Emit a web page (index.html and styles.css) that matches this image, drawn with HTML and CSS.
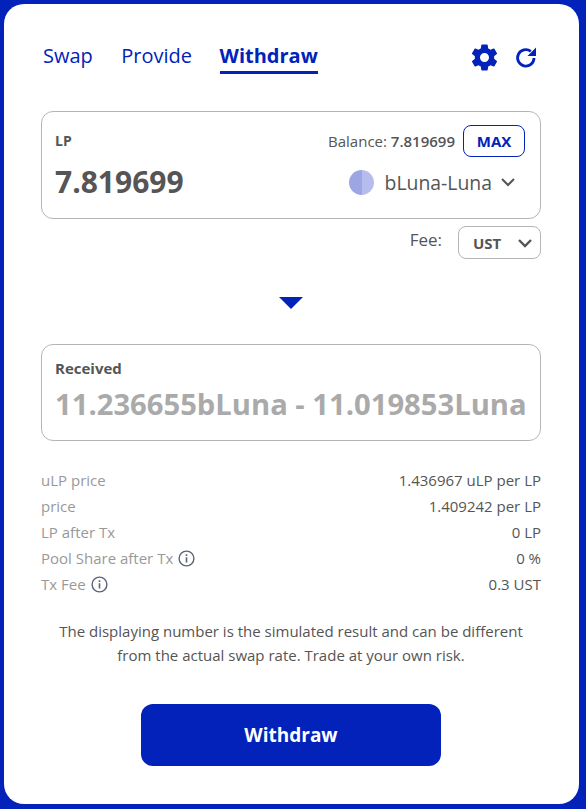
FILE: index.html
```html
<!DOCTYPE html>
<html lang="en">
<head>
    <meta charset="UTF-8">
    <title>Withdraw</title>
    <link rel="stylesheet" href="styles.css">
</head>
<body>
    <div class="card">
        <div class="top">
            <div class="tabs">
                <a class="tab">Swap</a>
                <a class="tab">Provide</a>
                <a class="tab active">Withdraw</a>
            </div>
            <div class="tools">
                <svg class="gear" width="31" height="31" viewBox="0 0 24 24"><path fill="#0222ba" d="M19.43 12.98c.04-.32.07-.64.07-.98s-.03-.66-.07-.98l2.11-1.65c.19-.15.24-.42.12-.64l-2-3.46c-.12-.22-.39-.3-.61-.22l-2.49 1c-.52-.4-1.08-.73-1.69-.98l-.38-2.65C14.46 2.18 14.25 2 14 2h-4c-.25 0-.46.18-.49.42l-.38 2.65c-.61.25-1.17.59-1.69.98l-2.49-1c-.23-.09-.49 0-.61.22l-2 3.46c-.13.22-.07.49.12.64l2.11 1.65c-.04.32-.07.65-.07.98s.03.66.07.98l-2.11 1.65c-.19.15-.24.42-.12.64l2 3.46c.12.22.39.3.61.22l2.49-1c.52.4 1.08.73 1.69.98l.38 2.65c.03.24.24.42.49.42h4c.25 0 .46-.18.49-.42l.38-2.65c.61-.25 1.17-.59 1.69-.98l2.49 1c.23.09.49 0 .61-.22l2-3.46c.12-.22.07-.49-.12-.64l-2.11-1.65zM12 15.5c-1.93 0-3.5-1.57-3.5-3.5s1.57-3.5 3.5-3.5 3.5 1.57 3.5 3.5-1.57 3.5-3.5 3.5z"/></svg>
                <svg class="refresh" width="24" height="24" viewBox="0 0 24 24"><path fill="none" stroke="#0222ba" stroke-width="2.8" d="M20 13a8.2 8.2 0 1 1-3.2-6.6"/><path fill="#0222ba" d="M22 2.5v8.5h-8.5z"/></svg>
            </div>
        </div>

        <div class="box from">
            <div class="box-row">
                <span class="box-label">LP</span>
                <div class="balance">
                    <span>Balance: <b>7.819699</b></span>
                    <button class="max">MAX</button>
                </div>
            </div>
            <div class="box-row amount-row">
                <span class="amount">7.819699</span>
                <div class="token">
                    <span class="token-icon"></span>
                    <span class="token-name">bLuna-Luna</span>
                    <svg width="16" height="10" viewBox="0 0 16 10"><path fill="none" stroke="#555" stroke-width="2" d="M2 2l6 6 6-6"/></svg>
                </div>
            </div>
        </div>

        <div class="fee">
            <span class="fee-label">Fee:</span>
            <div class="fee-select">
                <b>UST</b>
                <svg width="16" height="10" viewBox="0 0 16 10"><path fill="none" stroke="#555" stroke-width="2.4" d="M2 2l6 6 6-6"/></svg>
            </div>
        </div>

        <div class="arrow"></div>

        <div class="box to">
            <span class="box-label">Received</span>
            <div class="received">11.236655bLuna - 11.019853Luna</div>
        </div>

        <div class="info">
            <div class="info-row"><span>uLP price</span><span class="val">1.436967 uLP per LP</span></div>
            <div class="info-row"><span>price</span><span class="val">1.409242 per LP</span></div>
            <div class="info-row"><span>LP after Tx</span><span class="val">0 LP</span></div>
            <div class="info-row">
                <span class="with-icon">Pool Share after Tx
                    <svg width="17" height="17" viewBox="0 0 17 17"><circle cx="8.5" cy="8.5" r="7.4" fill="none" stroke="#5b6379" stroke-width="1.4"/><path fill="#5b6379" d="M7.7 7.2h1.6v5.3H7.7zM7.7 4.3h1.6v1.6H7.7z"/></svg>
                </span>
                <span class="val">0 %</span>
            </div>
            <div class="info-row">
                <span class="with-icon">Tx Fee
                    <svg width="17" height="17" viewBox="0 0 17 17"><circle cx="8.5" cy="8.5" r="7.4" fill="none" stroke="#5b6379" stroke-width="1.4"/><path fill="#5b6379" d="M7.7 7.2h1.6v5.3H7.7zM7.7 4.3h1.6v1.6H7.7z"/></svg>
                </span>
                <span class="val">0.3 UST</span>
            </div>
        </div>

        <p class="notice">The displaying number is the simulated result and can be different<br>from the actual swap rate. Trade at your own risk.</p>

        <button class="submit">Withdraw</button>
    </div>
</body>
</html>
```

FILE: styles.css
```css
* {
    margin: 0;
    padding: 0;
    box-sizing: border-box;
}

html, body {
    height: 100%;
}

body {
    font-family: "Open Sans", "Noto Sans", sans-serif;
    background: #0222ba;
    color: #555;
    padding: 4px 7px 5px 4px;
    overflow: hidden;
}

.card {
    background: white;
    border-radius: 20px;
    height: 800px;
    padding: 37px 38px 0 37px;
}

.top {
    display: flex;
    justify-content: space-between;
    align-items: flex-start;
    height: 70px;
}

.tabs {
    display: flex;
    gap: 28.5px;
    padding-left: 2px;
}

.tab {
    color: #0222ba;
    font-size: 20px;
    line-height: 30px;
    height: 33px;
}

.tab.active {
    margin-left: -1px;
    font-weight: 700;
    border-bottom: 3px solid #0222ba;
}

.tools {
    display: flex;
    align-items: center;
    gap: 14px;
    height: 30px;
    padding: 2px 3px 0 0;
}

.box {
    border: 1px solid #b5b5b5;
    border-radius: 12px;
}

.from {
    height: 108px;
    padding: 13px 15px 0 13px;
}

.box-row {
    display: flex;
    justify-content: space-between;
    align-items: center;
}

.box-label {
    font-size: 14px;
    font-weight: 700;
    line-height: 30px;
}

.balance {
    display: flex;
    align-items: center;
    gap: 8px;
    font-size: 15px;
}

.balance b {
    font-weight: 600;
}

.max {
    width: 62px;
    height: 32px;
    background: white;
    border: 1px solid #0222ba;
    border-radius: 8px;
    color: #0222ba;
    font-family: inherit;
    font-size: 15px;
    font-weight: 700;
}

.amount-row {
    margin-top: 6px;
}

.amount {
    font-size: 30px;
    font-weight: 700;
    line-height: 38px;
}

.token {
    display: flex;
    align-items: center;
    gap: 11px;
    padding-right: 9px;
}

.token svg {
    margin-left: -3px;
}

.token-icon {
    width: 25px;
    height: 25px;
    border-radius: 50%;
    background: linear-gradient(90deg, #9ba6e2 50%, #b6bdec 50%);
}

.token-name {
    font-size: 19.4px;
    font-weight: 500;
}

.fee {
    display: flex;
    justify-content: flex-end;
    align-items: flex-start;
    gap: 16px;
    margin-top: 7px;
    font-size: 17px;
}

.fee-label {
    line-height: 28px;
}

.fee-select {
    width: 83px;
    height: 33px;
    border: 1px solid #b5b5b5;
    border-radius: 8px;
    display: flex;
    justify-content: space-between;
    align-items: center;
    padding: 0 7px 0 14px;
    font-size: 15px;
}

.fee-select b {
    font-weight: 700;
}

.arrow {
    width: 0;
    margin: 38px auto 0;
    border-left: 12px solid transparent;
    border-right: 12px solid transparent;
    border-top: 12px solid #0222ba;
}

.to {
    height: 97px;
    margin-top: 35px;
    padding: 8px 13px 0;
}

.to .box-label {
    font-size: 15px;
}

.received {
    font-size: 29.2px;
    font-weight: 700;
    line-height: 38px;
    color: #aaa;
    white-space: nowrap;
    margin-top: 2px;
}

.info {
    margin-top: 26px;
}

.info-row {
    display: flex;
    justify-content: space-between;
    align-items: center;
    height: 26px;
    font-size: 15px;
    color: #999;
}

.val {
    color: #555;
}

.with-icon {
    display: flex;
    align-items: center;
    gap: 5px;
}

.notice {
    margin-top: 22px;
    text-align: center;
    font-size: 15px;
    line-height: 24px;
}

.submit {
    display: block;
    width: 300px;
    height: 62px;
    margin: 37px auto 0;
    padding-bottom: 1px;
    background: #0222ba;
    border: none;
    border-radius: 12px;
    color: white;
    font-family: inherit;
    font-size: 19px;
    font-weight: 700;
}
```
